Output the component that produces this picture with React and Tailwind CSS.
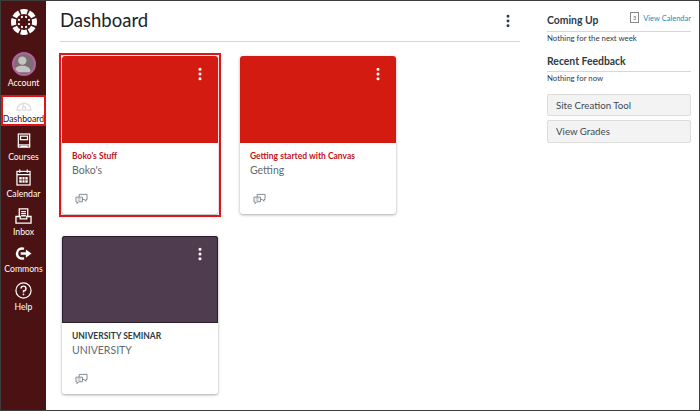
import React from 'react';
import { EllipsisVertical } from 'lucide-react';

const CanvasLogo = () => (
  <svg viewBox="0 0 26 26" className="w-[26px] h-[26px]" fill="#fff">
    {[0, 45, 90, 135, 180, 225, 270, 315].map((a) => (
      <g key={a} transform={`rotate(${a} 13 13)`}>
        <path d="M9 .64 A13 13 0 0 1 17 .64 L15.47 5.39 A8 8 0 0 0 10.53 5.39 Z" />
        <circle cx="13" cy="7.6" r="1.1" transform="rotate(22.5 13 13)" />
      </g>
    ))}
  </svg>
);

const Avatar = () => (
  <div className="w-[24px] h-[24px] rounded-full border-2 border-[#b5639f] bg-[#7c6f72] overflow-hidden">
    <svg viewBox="0 0 24 24" className="w-full h-full" fill="#c4c4c4">
      <circle cx="10" cy="8" r="5" />
      <path d="M0 22c0-6 5-8 10-8s10 2 10 8z" />
    </svg>
  </div>
);

const GaugeIcon = () => (
  <svg viewBox="0 0 22 16" className="w-[20px] h-[14px]" fill="none" stroke="#dedede" strokeWidth="1.6">
    <path d="M3 14 A8 8 0 1 1 19 14" />
    <path d="M3 14 H8 M14 14 H19" />
    <circle cx="11" cy="12" r="2" />
    <path d="M11 10 L9 6" />
  </svg>
);

const CoursesIcon = () => (
  <svg viewBox="0 0 16 18" className="w-[14px] h-[16px]" fill="none" stroke="#fff" strokeWidth="1.4">
    <rect x="1.5" y="1" width="13" height="12.5" />
    <rect x="4" y="3.5" width="8" height="4" />
    <path d="M1.5 13.5 V16 H14.5 V13.5 M4 15 H12" />
  </svg>
);

const CalendarIcon = () => (
  <svg viewBox="0 0 16 18" className="w-[15px] h-[17px]" fill="none" stroke="#fff" strokeWidth="1.3">
    <rect x="1" y="2.5" width="14" height="14.5" />
    <path d="M4 .5 V4 M12 .5 V4 M1 6 H15" />
    <path d="M3.5 8.5 H12.5 V14.5 H3.5 Z" fill="#fff" stroke="none" />
    <path d="M6.5 8.5 V14.5 M9.5 8.5 V14.5 M3.5 11.5 H12.5" stroke="#4a1212" strokeWidth=".8" />
  </svg>
);

const InboxIcon = () => (
  <svg viewBox="0 0 18 17" className="w-[17px] h-[16px]" fill="none" stroke="#fff" strokeWidth="1.4">
    <path d="M4.5 9 V1 H13.5 V9" />
    <path d="M6.5 3.8 H11.5 M6.5 6 H11.5 M6.5 8.2 H11.5" />
    <path d="M1 9 H5.5 V11.5 H12.5 V9 H17 V16 H1 Z" />
  </svg>
);

const CommonsIcon = () => (
  <svg viewBox="0 0 18 16" className="w-[17px] h-[15px]" fill="none" stroke="#fff" strokeWidth="2.6">
    <path d="M9.5 3 A5.4 5.4 0 1 0 9.5 13" />
    <path d="M6 8 H13" />
    <path d="M11.5 3.6 L17.5 8 L11.5 12.4 Z" fill="#fff" stroke="none" />
  </svg>
);

const HelpIcon = () => (
  <svg viewBox="0 0 18 18" className="w-[17px] h-[17px]" fill="none" stroke="#fff" strokeWidth="1.3">
    <circle cx="9" cy="9" r="8" />
    <path d="M6.4 7 A2.6 2.6 0 1 1 9 9.6 V11" strokeWidth="1.5" />
    <circle cx="9" cy="13.2" r=".9" fill="#fff" stroke="none" />
  </svg>
);

const ChatIcon = () => (
  <svg viewBox="0 0 14 13" className="w-[13px] h-[12px]" fill="none" stroke="#6b7780" strokeWidth=".9">
    <path d="M1 4.5 H8 V9.5 H4 L2.2 11.5 V9.5 H1 Z" />
    <path d="M4.5 4.5 V1.5 H13 V7 H11.8 V9 L10 7 H8" />
    <path d="M2.8 6.2 H6 M2.8 7.8 H6" strokeWidth=".6" />
  </svg>
);

const navItems = [
  { label: 'Courses', icon: CoursesIcon },
  { label: 'Calendar', icon: CalendarIcon },
  { label: 'Inbox', icon: InboxIcon },
  { label: 'Commons', icon: CommonsIcon },
  { label: 'Help', icon: HelpIcon }
];

const NavItem = ({ item }) => {
  const Icon = item.icon;
  return (
    <a className="h-[37.5px] flex flex-col items-center justify-end gap-[2px] text-white text-[8.7px] leading-[11px]">
      <Icon />
      <span>{item.label}</span>
    </a>
  );
};

const Card = ({ color, title, sub, titleClass, selected }) => (
  <div className="relative w-[156px] h-[158px] rounded-[3px] bg-white shadow-[0_1px_3px_rgba(0,0,0,0.35)]">
    {selected && <div className="absolute -inset-[3px] border-2 border-[#e2141a]" />}
    <div className={`relative h-[87px] rounded-t-[3px] ${color}`}>
      <EllipsisVertical className="absolute right-[10px] top-[10px] w-[16px] h-[16px] text-white" strokeWidth={2.6} />
    </div>
    <div className="pl-[10px] pt-[7px]">
      <p className={`text-[8.5px] leading-[12px] font-bold whitespace-nowrap ${titleClass}`}>{title}</p>
      <p className="mt-[1px] text-[10.5px] leading-[14px] text-[#5f6b73]">{sub}</p>
      <div className="mt-[16px] pl-[3px]"><ChatIcon /></div>
    </div>
  </div>
);

export default function App() {
  return (
    <div className="w-[700px] h-[411px] flex bg-white border border-[#3d3d3d] overflow-hidden font-['Lato','Liberation_Sans',sans-serif]">
      {/* Global nav */}
      <aside className="w-[45px] shrink-0 bg-[#4a1212] flex flex-col items-stretch">
        <div className="h-[40px] pt-[8px] flex justify-center"><CanvasLogo /></div>
        <div className="h-[47px] pt-[11px] flex flex-col items-center gap-[1px] text-white text-[8.7px] leading-[11px]">
          <Avatar />
          <span>Account</span>
        </div>
        <div className="mt-[7px] mb-[-2px] h-[31px] bg-white outline-2 outline-[#e2141a] -outline-offset-2 flex flex-col items-center justify-end pb-[2px] gap-[1px] text-[#2a1414] text-[8.7px] leading-[11px]">
          <GaugeIcon />
          <span>Dashboard</span>
        </div>
        {navItems.map((item) => <NavItem key={item.label} item={item} />)}
      </aside>

      {/* Main */}
      <main className="w-[474px] shrink-0 pl-[14px]">
        <header className="h-[41px] border-b border-[#d5d8da] flex items-center justify-between pb-[1px]">
          <h1 className="text-[18.5px] text-[#1a2328]">Dashboard</h1>
          <EllipsisVertical className="w-[16px] h-[16px] mr-[4px] text-[#2d3b45]" strokeWidth={2.4} />
        </header>
        <div className="pt-[14px] pl-[2px] grid grid-cols-[156px_156px] gap-x-[22px] gap-y-[22px]">
          <Card selected color="bg-[#d31b11]" title="Boko's Stuff" sub="Boko's" titleClass="text-[#bf1520]" />
          <Card color="bg-[#d31b11]" title="Getting started with Canvas" sub="Getting" titleClass="text-[#bf1520]" />
          <Card color="bg-[#4f3d4f] shadow-[inset_0_0_0_1px_#2b1f2b]" title="UNIVERSITY SEMINAR" sub="UNIVERSITY" titleClass="text-[#2d3b45]" />
        </div>
      </main>

      {/* Right side */}
      <section className="w-[144px] ml-[27px] shrink-0 text-[#2d3b45]">
        <div className="h-[31px] pt-[12px] border-b border-[#d5d8da] flex justify-between">
          <span className="text-[10.4px] leading-[14px] font-bold">Coming Up</span>
          <span className="flex items-start gap-[4px] text-[7.5px] leading-[11px] text-[#1a8ab8]">
            <span className="w-[9px] h-[11px] -mt-[1px] border border-[#888] text-[#555] text-[5px] leading-[10px] text-center">3</span>
            View Calendar
          </span>
        </div>
        <p className="mt-[1px] text-[7.8px] leading-[11px]">Nothing for the next week</p>
        <div className="mt-[10px] h-[18px] border-b border-[#d5d8da] text-[10.4px] leading-[14px] font-bold">Recent Feedback</div>
        <p className="mt-[1px] text-[7.8px] leading-[11px]">Nothing for now</p>
        <div className="mt-[10px] flex flex-col gap-[4px]">
          <button className="h-[22px] pl-[8px] text-left text-[9.7px] text-[#3d4a52] bg-[#f3f3f3] border border-[#dcdcdc] rounded-[2px]">Site Creation Tool</button>
          <button className="h-[23px] pl-[8px] text-left text-[9.7px] text-[#3d4a52] bg-[#f3f3f3] border border-[#dcdcdc] rounded-[2px]">View Grades</button>
        </div>
      </section>
    </div>
  );
}
